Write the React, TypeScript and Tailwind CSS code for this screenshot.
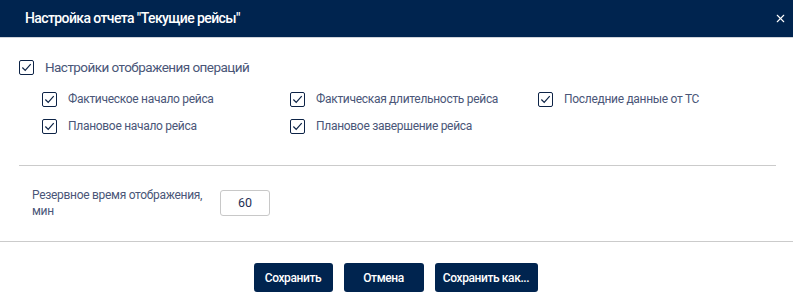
import { X } from 'lucide-react';

const Check = () => (
  <span className="inline-flex items-center justify-center w-[15px] h-[15px] rounded-[2px] border-[1.5px] border-[#0d2346] bg-white shrink-0">
    <svg viewBox="0 0 12 12" className="w-[11px] h-[11px]" fill="none" stroke="#0d2346" strokeWidth="1.3">
      <path d="M1.5 6 L4.6 9.2 L10.6 2.4" />
    </svg>
  </span>
);

const options = [
  'Фактическое начало рейса',
  'Фактическая длительность рейса',
  'Последние данные от ТС',
  'Плановое начало рейса',
  'Плановое завершение рейса',
];

export default function App() {
  return (
    <div className="w-[793px] h-[297px] bg-white flex flex-col" style={{ fontFamily: 'Roboto, "Noto Sans", sans-serif' }}>
      <div className="h-[38px] bg-[#00244f] border-b border-[#cfd3da] flex items-center justify-between pl-[25px] pr-[6px]">
        <span className="text-white text-[14px] font-medium tracking-[-0.6px]">Настройка отчета "Текущие рейсы"</span>
        <X className="w-[13px] h-[13px] text-white" strokeWidth={2} />
      </div>

      <div className="px-[19px] pt-[19px] pr-[17px]">
        <label className="flex items-center gap-[11px]">
          <Check />
          <span className="text-[13.5px] tracking-[-0.55px] text-[#4a5678]">Настройки отображения операций</span>
        </label>
        <div className="pl-[23px] pt-[15px] grid grid-cols-[248px_248px_1fr] gap-y-[12px] pb-[31px]">
          {options.map((o) => (
            <label key={o} className="flex items-center gap-[11px]">
              <Check />
              <span className="text-[12px] tracking-[-0.3px] text-[#4a5678] leading-[15px]">{o}</span>
            </label>
          ))}
        </div>
        <div className="border-t border-[#cbcbcb]" />
      </div>

      <div className="flex items-center pl-[32px] pt-[21px] pb-[22px]">
        <span className="w-[188px] text-[12px] tracking-[-0.3px] leading-[16px] text-[#4a5678]">Резервное время отображения, мин</span>
        <div className="w-[50px] h-[26px] border border-[#c8c8c8] rounded-[3px] flex items-center justify-center text-[12.5px] text-[#1f2f55]">
          60
        </div>
      </div>

      <div className="border-t border-[#cbcbcb]" />

      <div className="flex justify-center gap-[11px] pt-[21px] pr-[2px]">
        <button className="w-[79px] h-[29px] bg-[#00244f] rounded-[3px] text-white text-[12px] tracking-[-0.4px] font-medium">Сохранить</button>
        <button className="w-[80px] h-[29px] bg-[#00244f] rounded-[3px] text-white text-[12px] tracking-[-0.4px] font-medium">Отмена</button>
        <button className="w-[103px] h-[29px] bg-[#00244f] rounded-[3px] text-white text-[12px] tracking-[-0.4px] font-medium">Сохранить как...</button>
      </div>
    </div>
  );
}
